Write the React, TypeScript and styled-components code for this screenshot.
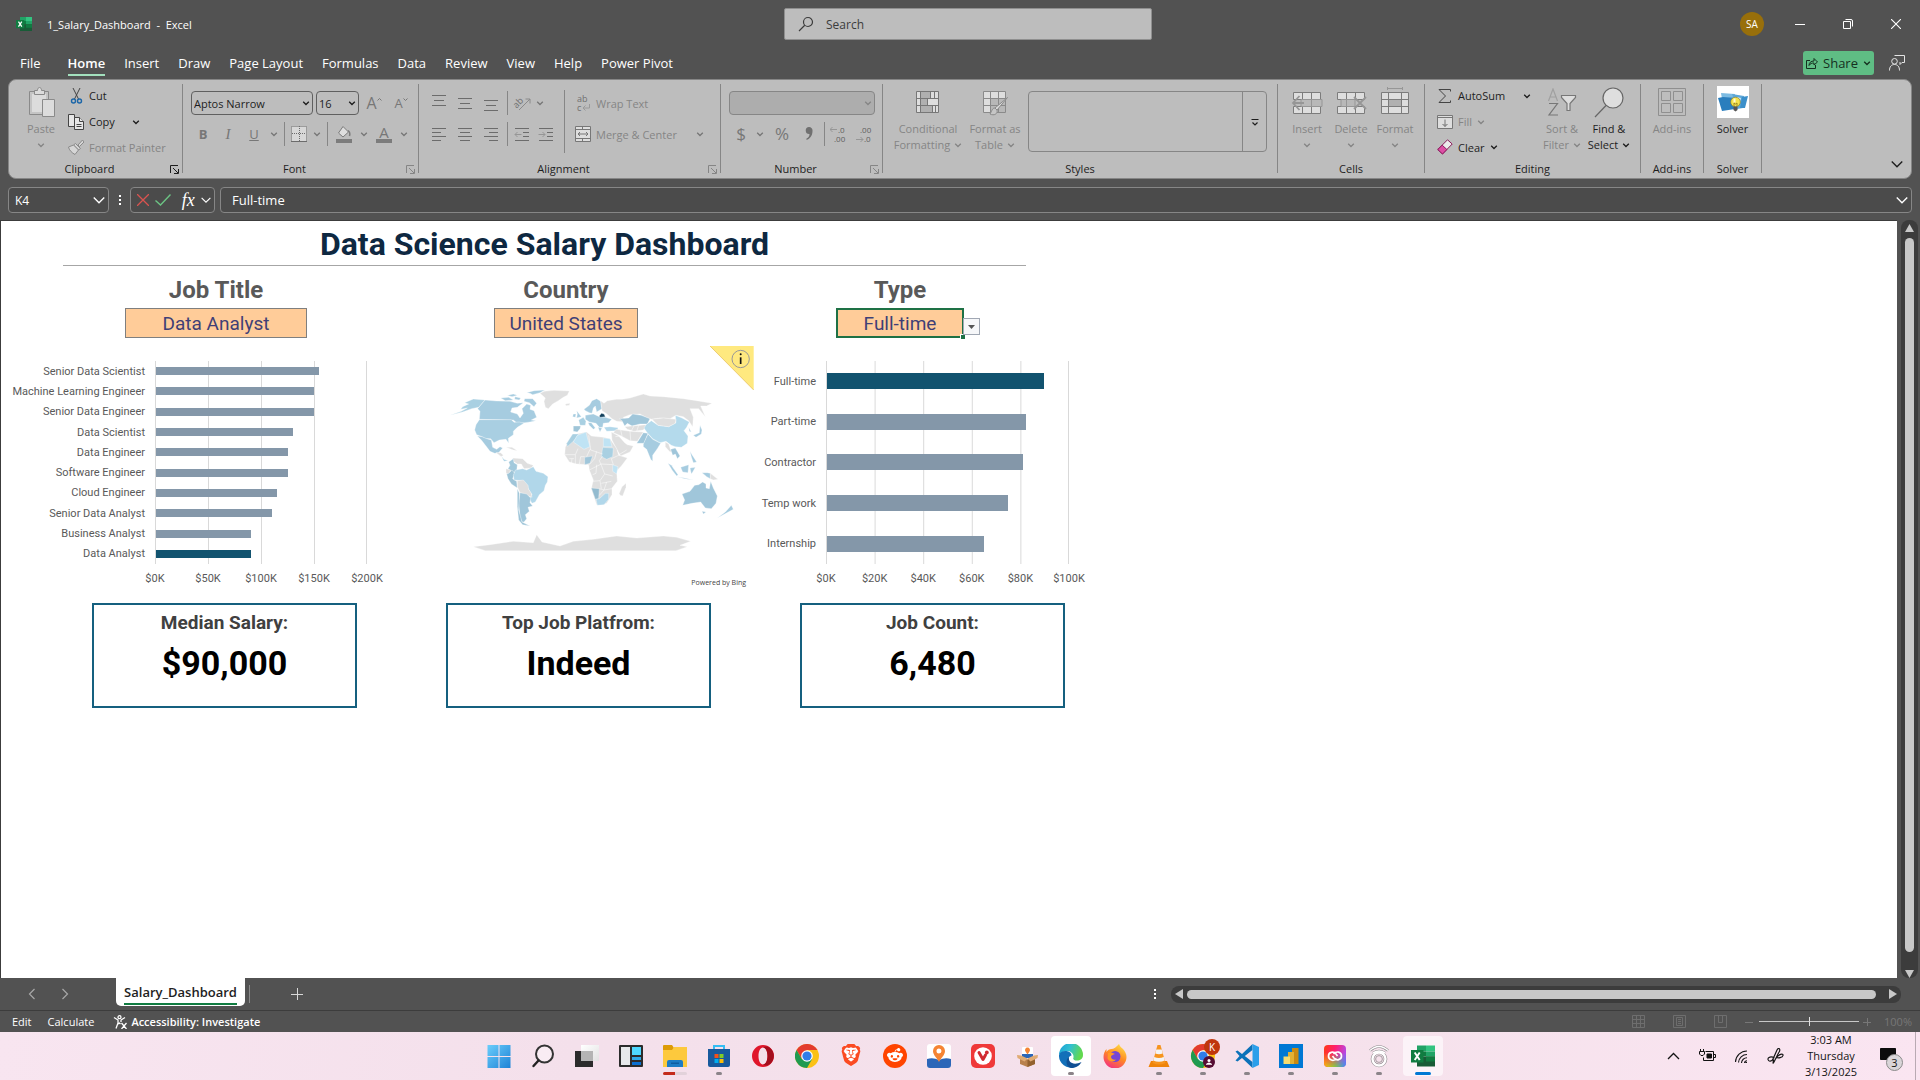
import React from "react";
import styled, { createGlobalStyle, css } from "styled-components";
import { FaBrave, FaRedditAlien } from "react-icons/fa6";

const UI = `"Open Sans", "Noto Sans", sans-serif`;
const CELL = `Roboto, "Liberation Sans", sans-serif`;
const C = {
  frame: "#525252",
  ribbon: "#bdbdbd",
  line: "#868686",
  ink: "#1d1d1d",
  off: "#858585",
  bar: "#8497a9",
  barOn: "#12536f",
  card: "#15607f",
};

const Global = createGlobalStyle`
  * { box-sizing: border-box; }
  html, body { margin: 0; height: 100%; }
  body { background: ${C.frame}; font-family: ${UI}; font-size: 11px; color: ${C.ink}; overflow: hidden; }
  button, input, select { font: inherit; color: inherit; margin: 0; padding: 0; border: 0; background: none; outline: none; }
  button { flex: none; }
  svg { display: block; flex: none; }
`;

const Shell = styled.div`
  height: 100vh;
  display: flex;
  flex-direction: column;
`;
const Inset = styled.div<{ $w: number }>`
  width: ${(p) => p.$w}px;
  flex: none;
`;
const Spacer = styled.div`
  flex: 1;
`;

/* ---------- title bar ---------- */
const TitleBar = styled.header`
  height: 48px;
  flex: none;
  display: grid;
  grid-template-columns: 1fr 368px 1fr;
  align-items: center;
  padding-left: 16px;
  color: #fff;
`;
const DocName = styled.div`
  display: flex;
  align-items: center;
  gap: 15px;
  white-space: pre;
`;
const SearchBox = styled.label`
  height: 32px;
  display: flex;
  align-items: center;
  gap: 12px;
  padding-left: 13px;
  border: 1px solid #8f8f8f;
  border-radius: 2px;
  background: #bdbdbd;
  color: #3c3c3c;
  font-size: 12px;
  input { flex: 1; min-width: 0; }
  input::placeholder { color: #3c3c3c; opacity: 1; }
`;
const WindowTools = styled.div`
  display: flex;
  justify-content: flex-end;
  align-items: center;
`;
const Avatar = styled.button`
  width: 24px;
  height: 24px;
  margin-right: 12px;
  border-radius: 50%;
  background: #986f0b;
  font-size: 10px;
`;
const WinButton = styled.button`
  width: 48px;
  height: 48px;
  display: grid;
  place-items: center;
`;

/* ---------- tabs ---------- */
const TabRow = styled.nav`
  height: 31px;
  flex: none;
  display: flex;
  align-items: center;
  padding: 0 15px 1px 11px;
  color: #fff;
  font-size: 13px;
`;
const Tab = styled.button<{ $active?: boolean; $wide?: boolean }>`
  height: 26px;
  padding: 0 10px 0 9px;
  margin-right: ${(p) => (p.$wide ? 8 : 0)}px;
  font-weight: ${(p) => (p.$active ? 600 : 400)};
  span {
    display: block;
    height: 26px;
    line-height: 26px;
    border-bottom: 2px solid ${(p) => (p.$active ? "#a3e0bd" : "transparent")};
  }
`;
const ShareButton = styled.button`
  height: 24px;
  width: 71px;
  display: flex;
  align-items: center;
  justify-content: center;
  gap: 5px;
  border-radius: 3px;
  background: #5fbd84;
  color: #15301f;
`;
const PlainButton = styled.button`
  margin-left: 15px;
  display: grid;
  color: #e4e4e4;
`;

/* ---------- ribbon ---------- */
const Ribbon = styled.section`
  height: 100px;
  flex: none;
  margin: 0 8px;
  display: flex;
  border: 1px solid ${C.line};
  border-radius: 8px;
  background: ${C.ribbon};
`;
const GroupBox = styled.div<{ $w: number }>`
  width: ${(p) => p.$w}px;
  display: flex;
  flex-direction: column;
`;
const GroupBody = styled.div`
  height: 80px;
  display: flex;
`;
const GroupFoot = styled.div`
  height: 18px;
  display: flex;
  align-items: center;
  line-height: 16px;
  span {
    flex: 1;
    text-align: center;
    white-space: nowrap;
  }
`;
const GroupRule = styled.div`
  width: 1px;
  margin: 4px 0 5px;
  background: ${C.line};
`;
const InnerRule = styled.div`
  width: 1px;
  margin: 10px 0 7px;
  background: ${C.line};
`;
const Launcher = styled.button<{ $off?: boolean }>`
  width: 12px;
  color: ${(p) => (p.$off ? C.off : C.ink)};
`;
const Rows = styled.div<{ $left: number; $w?: number }>`
  width: ${(p) => (p.$w ? p.$w + "px" : "100%")};
  padding: 11px 0 0 ${(p) => p.$left}px;
  display: flex;
  flex-direction: column;
  gap: 7px;
`;
const Row = styled.div<{ $gap?: number }>`
  height: 24px;
  display: flex;
  align-items: center;
  gap: ${(p) => p.$gap ?? 0}px;
`;
const Tool = styled.button<{ $w: number; $size?: number }>`
  width: ${(p) => p.$w}px;
  height: 24px;
  display: grid;
  place-items: center;
  color: #777;
  font-size: ${(p) => p.$size ?? 13}px;
  line-height: 24px;
`;
const Tick = styled.div`
  width: 1px;
  height: 24px;
  margin: 0 3px;
  background: ${C.line};
`;
const List = styled.div<{ $left: number; $w?: number }>`
  width: ${(p) => (p.$w ? p.$w + "px" : "auto")};
  flex: none;
  padding: 3px 0 0 ${(p) => p.$left}px;
  display: flex;
  flex-direction: column;
`;
const ListRow = styled.div`
  height: 26px;
  display: flex;
  align-items: center;
`;
const SmallButton = styled.button<{ $off?: boolean }>`
  height: 24px;
  padding: 0 1px;
  display: flex;
  align-items: center;
  gap: 5px;
  white-space: nowrap;
  color: ${(p) => (p.$off ? C.off : C.ink)};
`;
const CopyDrop = styled.button`
  margin-left: 16px;
`;
const BigButton = styled.button<{ $w: number; $off?: boolean }>`
  width: ${(p) => p.$w}px;
  padding-top: 6px;
  display: flex;
  flex-direction: column;
  align-items: center;
  gap: 3px;
  line-height: 16px;
  white-space: nowrap;
  color: ${(p) => (p.$off ? C.off : C.ink)};
`;
const BigIcon = styled.span`
  height: 32px;
  display: grid;
  place-items: center;
`;
const BigText = styled.span`
  display: flex;
  flex-direction: column;
  align-items: center;
  span {
    display: flex;
    align-items: center;
    gap: 4px;
    min-height: 16px;
  }
`;
const Pick = styled.label<{ $w: number; $off?: boolean }>`
  width: ${(p) => p.$w}px;
  height: 24px;
  display: flex;
  align-items: center;
  padding: 0 2px;
  border: 1px solid ${(p) => (p.$off ? C.line : "#606060")};
  border-radius: 4px;
  background: ${(p) => (p.$off ? "#adadad" : "transparent")};
  color: ${(p) => (p.$off ? C.off : C.ink)};
  select { flex: 1; min-width: 0; appearance: none; }
`;
const GrowText = styled.span`
  display: flex;
  svg { margin-top: 6px; }
`;
const Italic = styled.i`
  font-family: "Liberation Serif", serif;
  font-size: 15px;
`;
const FontColor = styled.span`
  width: 16px;
  height: 18px;
  border-bottom: 4px solid #7c7c7c;
  font-size: 15px;
  line-height: 14px;
`;
const Gallery = styled.div`
  width: 239px;
  height: 61px;
  margin: 11px 0 0 2px;
  display: flex;
  justify-content: flex-end;
  border: 1px solid ${C.line};
  border-radius: 4px;
`;
const GalleryMore = styled.button`
  width: 24px;
  display: grid;
  place-items: center;
  border-left: 1px solid ${C.line};
`;
const Collapse = styled.button`
  align-self: flex-end;
  padding: 8px;
`;

/* ---------- formula bar ---------- */
const FormulaRow = styled.div`
  height: 41px;
  flex: none;
  padding: 8px 8px 7px;
  display: flex;
  color: #fff;
  font-size: 12px;
`;
const Field = styled.div<{ $w?: number }>`
  ${(p) => (p.$w ? css`width: ${p.$w}px;` : css`flex: 1;`)}
  height: 26px;
  display: flex;
  align-items: center;
  justify-content: space-between;
  padding: 0 3px 0 6px;
  border: 1px solid #868686;
  border-radius: 4px;
  background: #4b4b4b;
  input { flex: 1; min-width: 0; }
`;
const FormulaInput = styled.input`
  padding-left: 5px;
  font-size: 13px;
`;
const Fx = styled.button`
  font-family: "Liberation Serif", serif;
  font-style: italic;
  font-size: 18px;
  padding-left: 4px;
`;
const Grip = styled.div`
  width: 21px;
  display: grid;
  place-items: center;
`;

/* ---------- sheet ---------- */
const Work = styled.main`
  flex: 1;
  min-height: 0;
  display: flex;
`;
const Sheet = styled.section`
  flex: 1;
  min-width: 0;
  overflow: hidden;
  border-left: 1px solid #3c3c3c;
  border-top: 1px solid #3c3c3c;
  background: #fff;
  font-family: ${CELL};
`;
const VScroll = styled.div`
  width: 23px;
  display: flex;
  flex-direction: column;
  align-items: center;
  padding-left: 2px;
`;
const VTrack = styled.div`
  flex: 1;
  width: 17px;
  display: flex;
  flex-direction: column;
  align-items: center;
  gap: 6px;
  padding-top: 4px;
  border-radius: 8px;
  background: #3c3c3c;
`;
const VThumb = styled.div`
  width: 9px;
  flex: 1;
  margin-bottom: 12px;
  border-radius: 5px;
  background: #c8c8c8;
`;
const Heading = styled.h1`
  width: 963px;
  height: 45px;
  margin: 0 0 0 62px;
  border-bottom: 1px solid #a6a6a6;
  text-align: center;
  font-size: 32px;
  line-height: 46px;
  font-weight: 700;
  color: #0e2841;
`;
const Filters = styled.div`
  display: grid;
  grid-template-columns: 430px 270px 398px;
  justify-items: center;
  align-items: start;
  padding-top: 11px;
  height: 80px;
`;
const FilterCell = styled.div`
  position: relative;
  display: flex;
  flex-direction: column;
  align-items: center;
  gap: 5px;
  label {
    height: 26px;
    line-height: 26px;
    font-size: 24px;
    font-weight: 700;
    color: #595959;
  }
`;
const CellSelect = styled.select<{ $w: number; $on?: boolean }>`
  appearance: none;
  width: ${(p) => p.$w}px;
  height: 30px;
  border: ${(p) => (p.$on ? "2px solid #1e7145" : "1px solid #7f7f7f")};
  background: #ffcc99;
  color: #3f3f76;
  font-size: 19px;
  text-align: center;
  text-align-last: center;
`;
const DropMark = styled.button`
  position: absolute;
  right: -16px;
  bottom: 3px;
  width: 17px;
  height: 17px;
  display: grid;
  place-items: center;
  border: 1px solid #a0a7b3;
  background: #f6f7f9;
  color: #555;
`;
const FillHandle = styled.i`
  position: absolute;
  right: -1px;
  bottom: -1px;
  width: 5px;
  height: 5px;
  border-left: 1px solid #fff;
  border-top: 1px solid #fff;
  background: #1e7145;
`;
const Charts = styled.div`
  height: 257px;
  display: grid;
  grid-template-columns: 438px 315px 340px;
`;
const Chart = styled.figure<{ $labels: number; $plot: number }>`
  margin: 0;
  padding-top: 15px;
  display: grid;
  grid-template-columns: ${(p) => p.$labels}px ${(p) => p.$plot}px;
  grid-template-rows: 203px 28px;
  font-size: 11px;
  color: #595959;
`;
const Names = styled.div`
  display: flex;
  flex-direction: column;
  padding-right: 10px;
  span {
    flex: 1;
    display: flex;
    align-items: center;
    justify-content: flex-end;
    white-space: nowrap;
  }
`;
const Plot = styled.div<{ $steps: number }>`
  display: flex;
  flex-direction: column;
  padding-left: 1px;
  border-right: 1px solid #d9d9d9;
  background-image: linear-gradient(to right, #d9d9d9 1px, transparent 1px);
  background-size: calc((100% + 1px) / ${(p) => p.$steps}) 100%;
`;
const BarRow = styled.div`
  flex: 1;
  display: flex;
  align-items: center;
`;
const Bar = styled.div<{ $h: number; $on?: boolean }>`
  height: ${(p) => p.$h}px;
  background: ${(p) => (p.$on ? C.barOn : C.bar)};
`;
const Axis = styled.div`
  grid-column: 2;
  display: flex;
  justify-content: space-between;
  align-items: center;
  span {
    width: 0;
    display: flex;
    justify-content: center;
    white-space: nowrap;
  }
`;
const MapBox = styled.figure`
  margin: 0;
  display: flex;
  flex-direction: column;
  align-items: flex-end;
  gap: 22px;
  color: #444;
  figcaption { padding-right: 8px; font-family: ${UI}; font-size: 7px; }
`;
const Cards = styled.div`
  display: flex;
  gap: 89px;
  padding-left: 91px;
`;
const Card = styled.article`
  width: 265px;
  height: 105px;
  border: 2px solid ${C.card};
  text-align: center;
  h2 {
    margin: 6px 0 0;
    font-size: 19px;
    line-height: 24px;
    color: #404040;
  }
  p {
    margin: 8px 0 0;
    font-size: 34px;
    line-height: 40px;
    font-weight: 700;
    color: #000;
  }
`;

/* ---------- sheet tabs and status ---------- */
const SheetTabs = styled.div`
  height: 32px;
  flex: none;
  display: flex;
  align-items: center;
  color: #d8d8d8;
  padding: 0 19px 0 15px;
`;
const SheetNav = styled.button`
  width: 33px;
  display: grid;
  place-items: center;
  color: #a8a8a8;
`;
const SheetTab = styled.button`
  align-self: flex-start;
  height: 28px;
  margin-left: 35px;
  padding: 0 8px;
  border-radius: 0 0 5px 5px;
  background: #fff;
  color: #222;
  font-size: 13px;
  font-weight: 600;
  span {
    display: block;
    height: 25px;
    width: 113px;
    line-height: 25px;
    border-bottom: 2px solid #107c41;
  }
`;
const TabRule = styled.div`
  width: 1px;
  height: 18px;
  margin-left: 4px;
  background: #8a8a8a;
`;
const AddSheet = styled.button`
  margin-left: 41px;
`;
const HScroll = styled.div`
  width: 730px;
  height: 17px;
  margin-left: 15px;
  display: flex;
  align-items: center;
  gap: 4px;
  padding: 0 4px;
  border-radius: 8px;
  background: #3c3c3c;
`;
const HThumb = styled.div`
  flex: 1;
  height: 9px;
  margin-right: 9px;
  border-radius: 5px;
  background: #c8c8c8;
`;
const Status = styled.footer`
  height: 22px;
  flex: none;
  display: flex;
  align-items: center;
  gap: 16px;
  padding: 0 8px 0 12px;
  border-top: 1px solid #3c3c3c;
  color: #fff;
`;
const Access = styled.button`
  display: flex;
  align-items: center;
  gap: 4px;
  margin-left: 3px;
  font-weight: 600;
`;
const ViewTools = styled.div`
  display: flex;
  align-items: center;
  color: #777;
`;
const ViewButton = styled.button`
  width: 41px;
  display: grid;
  place-items: center;
  color: #6e6e6e;
`;
const Zoom = styled.input`
  appearance: none;
  width: 100px;
  height: 10px;
  margin: 0 4px 0 6px;
  background: linear-gradient(#c8c8c8, #c8c8c8) center / 100% 1px no-repeat;
  &::-webkit-slider-thumb {
    appearance: none;
    width: 1px;
    height: 9px;
    background: #e0e0e0;
  }
`;

/* ---------- taskbar ---------- */
const Taskbar = styled.footer`
  height: 48px;
  flex: none;
  display: grid;
  grid-template-columns: 1fr auto 1fr;
  padding-left: 2px;
  background: linear-gradient(100deg, #f8e5f0, #f4e0eb 30%, #f5e1eb 65%, #fae5f1);
  color: #141414;
`;
const Apps = styled.div`
  grid-column: 2;
  display: flex;
`;
const AppSlot = styled.button<{ $bg?: string }>`
  width: 44px;
  height: 48px;
  padding: 4px 2px 5px;
  span {
    height: 40px;
    display: flex;
    flex-direction: column;
    align-items: center;
    padding-top: 8px;
    gap: 4px;
    border-radius: 4px;
    background: ${(p) => p.$bg ?? "transparent"};
  }
`;
const Mark = styled.i<{ $kind: string }>`
  flex: none;
  width: ${(p) => ({ dot: 6, busy: 24, open: 16 })[p.$kind]}px;
  height: 3px;
  border-radius: 2px;
  background: ${(p) =>
    ({ dot: "#8b8489", busy: "linear-gradient(90deg, #c42b1c 50%, #e2d2da 50%)", open: "#0078d4" })[p.$kind]};
`;
const Tray = styled.div`
  display: flex;
  justify-content: flex-end;
  align-items: center;
  padding-right: 4px;
`;
const TrayButton = styled.button`
  width: 34px;
  display: grid;
  place-items: center;
`;
const Clock = styled.time`
  width: 78px;
  text-align: center;
  line-height: 16px;
`;
const Notice = styled.button`
  position: relative;
  width: 36px;
  height: 48px;
  display: grid;
  place-items: center;
`;
const Badge = styled.b`
  position: absolute;
  left: 16px;
  top: 22px;
  width: 17px;
  height: 17px;
  border: 1px solid #8a8a8a;
  border-radius: 50%;
  background: #d9d5d8;
  font-size: 11px;
  font-weight: 400;
  line-height: 15px;
`;
const Edge = styled.div`
  width: 1px;
  height: 48px;
  margin-left: 9px;
  background: #b9aab3;
`;

/* ---------- line icons ---------- */
type IconProps = { d: string; w?: number; h?: number; s?: number; c?: string; f?: string };
const Line = ({ d, w = 16, h = w, s = 1, c = "currentColor", f = "none" }: IconProps) => (
  <svg width={w} height={h} viewBox={`0 0 ${w} ${h}`} fill={f} stroke={c} strokeWidth={s}>
    <path d={d} />
  </svg>
);
const Chevron = ({ w = 8 }: { w?: number }) => (
  <svg width={w} height={w} viewBox="0 0 8 8" fill="none" stroke="currentColor" strokeWidth={w > 8 ? 0.9 : 1.3}>
    <path d={w > 8 ? "M.5 2.300 4 5.800l3.500-3.500" : "M1.200 2.700 4 5.500l2.800-2.800"} />
  </svg>
);
const Drop = () => (
  <Tool $w={14} aria-label="More">
    <Chevron />
  </Tool>
);

const PasteIcon = () => (
  <svg width="30" height="32" viewBox="0 0 30 32" fill="#dcdcdc" stroke="#8a8a8a">
    <path d="M3.500 5.500h19v23h-19z" fill="#c4c4c4" />
    <path d="M6 8h14v18H6z" stroke="none" />
    <path d="M8.500 8.500v-4h3c0-4 4-4 4 0h3v4z" />
    <path d="M16.500 13.500h12v17h-12z" />
  </svg>
);
const CutIcon = () => (
  <svg width="16" height="16" viewBox="0 0 16 16" fill="none" stroke="#444">
    <path d="M5 0l5.500 11M12 0 6.500 11" />
    <circle cx="5.500" cy="13" r="2" stroke="#1b66a8" strokeWidth="1.400" />
    <circle cx="11.500" cy="13" r="2" stroke="#1b66a8" strokeWidth="1.400" />
  </svg>
);
const CopyIcon = () => (
  <svg width="16" height="16" viewBox="0 0 16 16" fill="#e6e6e6" stroke="#444">
    <path d="M.5.500h6v12h-6z" />
    <path d="M6.500 3.500h5l4 4v8h-9z" />
    <path d="M11.500 3.500v4h4M8.500 10.500h5M8.500 12.500h5" />
  </svg>
);
const BrushIcon = () => (
  <svg width="16" height="16" viewBox="0 0 16 16" fill="#d6d6d6" stroke="#8a8a8a">
    <path d="M14.500 1 10 6l1.500 1.500L16 3z" />
    <path d="M7.500 4.500l5 5-2 1.500-5-5z" />
    <path d="M5.500 6l5 5-3.500 4.500C4 14 1 11 .5 8z" />
  </svg>
);
const AlignIcon = ({ lines }: { lines: [number, number, number][] }) => (
  <svg width="16" height="16" viewBox="0 0 16 16" stroke="#6c6c6c">
    {lines.map(([y, a, b]) => (
      <path key={y} d={`M${a} ${y + 0.5}H${b}`} />
    ))}
  </svg>
);
const IndentIcon = ({ out }: { out?: boolean }) => (
  <svg width="16" height="16" viewBox="0 0 16 16" fill="none" stroke="#6c6c6c">
    <path d="M1 2.500h14M9 6.500h6M9 10.500h6M1 14.500h14" />
    <path stroke="#969696" d={out ? "M7.500 8.500H1M3.500 6 1 8.500 3.500 11" : "M.5 8.500H7M4.500 6 7 8.500 4.500 11"} />
  </svg>
);
const BorderIcon = () => (
  <svg width="16" height="16" viewBox="0 0 16 16" fill="none" stroke="#6c6c6c">
    <path d="M.5.500h15v15H.5z" fill="#d8d8d8" strokeDasharray="1 1" />
    <path d="M8.500 0v15M1 7.500h14" strokeDasharray="1 1" />
    <path d="M0 15.500h16" />
  </svg>
);
const FillIcon = () => (
  <svg width="18" height="18" viewBox="0 0 18 18" fill="#dedede" stroke="#7c7c7c">
    <path d="M8 1.500 13.500 7 8 12 3.500 8z" />
    <path d="M13 5.500c2.500 2 2 4 1.500 5.500" fill="none" strokeWidth="1.500" />
    <path d="M1 14h16v4H1z" fill="#7c7c7c" stroke="none" />
  </svg>
);
const Orientation = () => (
  <svg width="18" height="18" viewBox="0 0 18 18" fill="none" stroke="#8a8a8a">
    <text x="0" y="12" fontSize="9" fill="#707070" stroke="none" transform="rotate(-45 5 9)" fontFamily={UI}>
      ab
    </text>
    <path d="M6 16 17 5M12.500 5H17v4.500" />
  </svg>
);
const WrapIcon = () => (
  <svg width="16" height="20" viewBox="0 0 16 20" fill="none" stroke="#9a9a9a">
    <text x="2" y="9" fontSize="9" fill="#707070" stroke="none" fontFamily={UI}>ab</text>
    <text x="2" y="18" fontSize="9" fill="#707070" stroke="none" fontFamily={UI}>c</text>
    <path d="M14.500 11v4H8M10.500 12.500 8 15l2.500 2.500" />
  </svg>
);
const MergeIcon = () => (
  <svg width="16" height="16" viewBox="0 0 16 16" fill="#dedede" stroke="#777">
    <path d="M.5.500h15v15H.5zM.5 3.500h15M.5 12.500h15M7.500.500v3M7.500 12.500v3M3 8h10M5 6 3 8l2 2M11 6l2 2-2 2" />
  </svg>
);
const Decimal = ({ more }: { more?: boolean }) => (
  <svg width="17" height="20" viewBox="0 0 17 20" fill="none" stroke="#969696">
    <text x={more ? 4 : 8} y="9" fontSize="8" fill="#606060" stroke="none" fontFamily={UI}>{more ? ".00" : ".0"}</text>
    <text x={more ? 8 : 4} y="18" fontSize="8" fill="#606060" stroke="none" fontFamily={UI}>{more ? ".0" : ".00"}</text>
    <path d={more ? "M0 15.500h7M4.500 13 7 15.500 4.500 18" : "M7 5.500H0M2.500 3 0 5.500 2.500 8"} />
  </svg>
);
const CondIcon = () => (
  <svg width="28" height="24" viewBox="0 0 28 24" fill="#dedede" stroke="#777">
    <path d="M2.500 1.500h22v21h-22z" />
    <path d="M7 2h9v6H7zM7 9h7v6H7zM7 16h11v6H7z" fill="#b0b0b0" stroke="none" />
    <path d="M2.500 8.500h22M2.500 15.500h22M6.500 1.500v21M20.500 1.500v7M16.500 1.500v7M13.500 8.500v7M18.500 15.500v7M21.500 15.500v7" />
  </svg>
);
const TableIcon = () => (
  <svg width="30" height="30" viewBox="0 0 30 30" fill="#dedede" stroke="#8a8a8a">
    <path d="M3.500 4.500h22v21h-22z" />
    <path d="M11 12h14v13H11z" fill="#b8b8b8" stroke="none" />
    <path d="M3.500 11.500h22M3.500 18.500h22M10.500 4.500v21M18.500 4.500v21" />
    <path d="M27.500 10.500 17 23l-2-2z" />
    <path d="M15 21c-3 0-3 3-5 6 4 2 8 0 7-4z" fill="#c6c6c6" />
  </svg>
);
const CellsIcon = ({ kind }: { kind: "insert" | "delete" | "format" }) => (
  <svg width="32" height="30" viewBox="0 0 32 30" fill="#dedede" stroke="#7c7c7c">
    {kind === "format" ? (
      <>
        <path d="M2.500 5.500h27v21h-27zM2.500 12.500h27M2.500 19.500h27M9.500 5.500v21M22.500 5.500v21" />
        <path d="M10 13h12v6H10z" fill="#b0b0b0" stroke="none" />
        <path d="M8.500 1.500h15M8.500 0v3M23.500 0v3" stroke="#969696" />
      </>
    ) : (
      <>
        <path d="M2.500 5.500h27v7h-27zM2.500 19.500h27v7h-27zM11.500 5.500v7M20.500 5.500v7M11.500 19.500v7M20.500 19.500v7" />
        {kind === "insert" ? (
          <>
            <path d="M10 12.500h21v7H10zM20.500 12.500v7" fill="#b8b8b8" stroke="#969696" />
            <path d="M13 16H2M8.500 9 2 16l6.500 7" fill="none" stroke="#969696" strokeWidth="1.800" />
          </>
        ) : (
          <>
            <path d="M6 12.500h14v7H6zM11.500 12.500v7" fill="#b8b8b8" stroke="#969696" />
            <path d="M19 10l12 12M31 10 19 22" fill="none" stroke="#969696" strokeWidth="1.800" />
          </>
        )}
      </>
    )}
  </svg>
);
const SigmaIcon = () => <Line d="M13.500 3.500v-2H2L8.500 8 2 14.500h11.500v-2" c="#444" />;
const FillDown = () => (
  <svg width="16" height="14" viewBox="0 0 16 14" fill="#dedede" stroke="#777">
    <path d="M.5.500h15v13H.5zM.5 2.500h15M8 4.500v7M5.500 9 8 11.500 10.500 9" />
  </svg>
);
const Eraser = () => (
  <svg width="16" height="16" viewBox="0 0 16 16" fill="#ececec" stroke="#8b1a5c">
    <path d="M10.500.800 15.200 5 5.500 15 .8 10.500z" />
    <path d="M5.200 6.200 9.900 10.500 5.500 15 .8 10.500z" fill="#dd4fa5" />
  </svg>
);
const SortIcon = () => (
  <svg width="30" height="28" viewBox="0 0 30 28" fill="none" stroke="#8a8a8a" strokeWidth="1.200">
    <path d="M1.500 13 6 1l4.500 12M3 9h6" stroke="#a0a0a0" />
    <path d="M2 15.500h8.500L2 27h9" stroke="#777" />
    <path d="M14.500 7.500h14v2l-5.500 6v7h-3v-7l-5.500-6z" fill="#dedede" stroke="#777" />
  </svg>
);
const FindIcon = () => (
  <svg width="32" height="32" viewBox="0 0 32 32" fill="#dedede" stroke="#666" strokeWidth="1.200">
    <circle cx="20" cy="12" r="10" />
    <path d="M13 19.500 2 31" />
  </svg>
);
const AddinsIcon = () => (
  <svg width="28" height="28" viewBox="0 0 28 28" fill="none" stroke="#8f8f8f">
    <path d="M.5.500h27v27H.5zM3.500 3.500h9v9h-9zM15.500 3.500h9v9h-9zM3.500 15.500h9v9h-9zM15.500 15.500h9v9h-9z" />
  </svg>
);
const SolverIcon = () => (
  <svg width="32" height="32" viewBox="0 0 32 32">
    <path fill="#fff" d="M0 0h32v32H0z" />
    <path fill="#7cbbe2" d="M4 7l14 1-1 6-12-1z" />
    <path fill="#2a7ebd" d="M1 12l5-1 13 1-1 11-13 2z" />
    <path fill="#5da7d8" d="M15 8l12 2-1 12-6 1z" />
    <path fill="#cfe6f5" d="M20 11l4 1-1 4-3-1z" />
    <path fill="#3b8fca" d="M25 11l6-1-3 12h-5z" />
    <circle cx="18.500" cy="16" r="4.800" fill="#f5e34c" stroke="#8a7a20" strokeWidth=".6" />
    <path fill="#fffbd0" d="M16.500 12.500h2v4h-2z" />
    <path fill="none" stroke="#8a7a20" strokeWidth=".8" d="M17 20v-3l1.500 1 1.500-1v3" />
    <path fill="#555" d="M16.500 20.500h4V24l-2 1.500-2-1.500z" />
  </svg>
);
const ExcelIcon = ({ size }: { size: number }) => (
  <svg width={size} height={size} viewBox="0 0 24 24">
    <path fill="#21a366" d="M6 1.500h9v6H6z" />
    <path fill="#33c481" d="M15 1.500h9v6h-9z" />
    <path fill="#107c41" d="M6 7.500h9v5H6z" />
    <path fill="#21a366" d="M15 7.500h9v5h-9z" />
    <path fill="#185c37" d="M6 12.500h18v10H6z" />
    <path fill="#107c41" d="M15 12.500h9v5h-9zM0 6h12.500v12.500H0z" />
    <path stroke="#fff" strokeWidth="1.900" d="M3.700 8.500l5 7.500M8.700 8.500l-5 7.500" />
  </svg>
);

/* ---------- taskbar logos ---------- */
const Logo = ({ children }: { children: React.ReactNode }) => (
  <svg width="24" height="24" viewBox="0 0 24 24">
    {children}
  </svg>
);
const ChromeArt = () => (
  <>
    <circle cx="12" cy="12" r="12" fill="#fbc116" />
    <path fill="#e33b2e" d="M1.600 6A12 12 0 0 1 22.400 6H12L6.800 15z" />
    <path fill="#1f9a50" d="M1.600 6A12 12 0 0 0 12 24l5.200-9-10.400 0z" />
    <circle cx="12" cy="12" r="5.800" fill="#fff" />
    <circle cx="12" cy="12" r="4.600" fill="#2f7de9" />
  </>
);
const Windows = () => (
  <Logo>
    <defs>
      <linearGradient id="win" x2="1" y2="1">
        <stop stopColor="#6bcdfb" />
        <stop offset="1" stopColor="#1d82d6" />
      </linearGradient>
    </defs>
    <path fill="url(#win)" d="M.5 1h11v11H.5zM12.500 1h11v11h-11zM.5 13h11v11H.5zM12.500 13h11v11h-11z" />
  </Logo>
);
const SearchLogo = () => (
  <Logo>
    <circle cx="13.500" cy="10" r="8.500" fill="#f9ecf3" stroke="#333" strokeWidth="2" />
    <path stroke="#222" strokeWidth="2.400" strokeLinecap="round" d="M7.500 16.500 2.500 22" />
  </Logo>
);
const TaskView = () => (
  <Logo>
    <defs>
      <linearGradient id="tv" x2="1" y2="1">
        <stop stopColor="#ffffff" />
        <stop offset="1" stopColor="#e2e2e2" />
      </linearGradient>
    </defs>
    <path fill="#2b2b2b" d="M0 7h18v16H0z" />
    <path fill="url(#tv)" d="M6 1h18v16H6z" />
    <path fill="#b4b4b4" d="M6 7h12v10H6z" />
  </Logo>
);
const Widgets = () => (
  <Logo>
    <rect y="1" width="24" height="22" rx="1" fill="#2c2c2c" />
    <path fill="#e6e8ea" d="M2 3h9v18H2z" />
    <path fill="#4fd8ff" d="M13 3h9v8h-9z" />
    <path fill="#2fa9e8" d="M13 13h9v3h-9z" />
    <path fill="#0b6fd0" d="M13 18h9v3h-9z" />
  </Logo>
);
const Folder = () => (
  <Logo>
    <path fill="#dd9b06" d="M0 2q0-1 1-1h8l2 3v4H0z" />
    <path fill="#fdc93d" d="M0 6h9l2-3h13v20H0z" />
    <path fill="#1d7cc4" d="M4 23v-5q0-2 2-2h12q2 0 2 2v5z" />
    <path fill="#0f5da0" d="M8 18.500h8v1.500H8z" />
  </Logo>
);
const Store = () => (
  <Logo>
    <path fill="none" stroke="#35bdf3" strokeWidth="2" d="M7 6V2h10v4" />
    <path fill="#175a9d" d="M1 5h22v16q0 2-2 2H3q-2 0-2-2z" />
    <path fill="#f1511b" d="M7.500 10h4v4h-4z" />
    <path fill="#80cc28" d="M12.500 10h4v4h-4z" />
    <path fill="#00adef" d="M7.500 15h4v4h-4z" />
    <path fill="#fbbc09" d="M12.500 15h4v4h-4z" />
  </Logo>
);
const Opera = () => (
  <Logo>
    <path fill="#e0162b" fillRule="evenodd" d="M12 1a11 11 0 1 0 0 22 11 11 0 0 0 0-22zm0 2.500c2.800 0 4.500 3.700 4.500 8.500s-1.700 8.500-4.500 8.500S7.500 16.800 7.500 12 9.200 3.500 12 3.500z" />
    <path fill="#a30f1e" d="M12 3.500c3-2 6.500-.5 8.500 2 3 4 3 9 0 13-2 2.500-5.500 4-8.500 2 2.800 0 4.500-3.700 4.500-8.500S14.800 3.500 12 3.500z" />
  </Logo>
);
const Maps = () => (
  <Logo>
    <rect width="24" height="24" rx="3" fill="#fff" />
    <path fill="#2b66b8" d="M0 15q6-2 12 1 6-3 12-1v6q0 3-3 3H3q-3 0-3-3z" />
    <path fill="#f58433" fillRule="evenodd" d="M12 1a6 6 0 0 1 6 6c0 4-4 7-6 11-2-4-6-7-6-11a6 6 0 0 1 6-6zm0 3.500a2.500 2.500 0 1 0 0 5 2.500 2.500 0 0 0 0-5z" />
  </Logo>
);
const Vivaldi = () => (
  <Logo>
    <rect width="24" height="24" rx="5" fill="#ef3939" />
    <circle cx="12" cy="12" r="8.800" fill="#fff" />
    <path fill="none" stroke="#d02a30" strokeWidth="3" strokeLinecap="round" strokeLinejoin="round" d="M8 8.500l4 7 2.500-4.500" />
    <circle cx="15.800" cy="8.500" r="1.900" fill="#d02a30" />
  </Logo>
);
const Parcel = () => (
  <Logo>
    <rect x="7" y="3" width="11" height="9" rx="1" fill="#fff" />
    <path fill="#2b66b8" d="M7 10h11v4H7z" />
    <path fill="#f58433" d="M12.500 3.500a2.500 2.500 0 0 1 2 4l-2 3-2-3a2.500 2.500 0 0 1 2-4z" />
    <path fill="#b9814c" d="M5 13l7.500 2.500L20 13v7l-7.500 3L5 20z" />
    <path fill="#93622f" d="M12.500 15.500 20 13v7l-7.500 3z" />
    <path fill="#e0ab74" d="M2 11l4 .5 6.500 3-3 3L2.500 14zM23 11l-4 .5-6.500 3 3 3 7-3.500z" />
  </Logo>
);
const EdgeLogo = () => (
  <Logo>
    <defs>
      <linearGradient id="edg" x2="1" y2=".3">
        <stop stopColor="#1a9fd8" />
        <stop offset=".5" stopColor="#32c0d0" />
        <stop offset="1" stopColor="#62d94f" />
      </linearGradient>
    </defs>
    <path fill="url(#edg)" d="M0 11A12 12 0 0 1 24 11c0 4-3 5.500-6 5.500s-4.500-1.500-3.500-3C15 9 11 7 8 7 4 7 1 9 0 11z" />
    <path fill="#1370b9" d="M0 11c1-3 4-4.500 7.500-4 3 .3 5 2 5 4.500-3 .5-4 4-2.500 7 1 2 3 4 6 4.500A12 12 0 0 1 0 11z" />
    <path fill="#0f4f93" d="M10 13c-1 5 4 9 12.500 5-2 3.500-5 6-10.500 6-5-1-6-8-2-11z" />
  </Logo>
);
const Firefox = () => (
  <Logo>
    <defs>
      <linearGradient id="ffx" x1=".8" y1="0" x2=".3" y2="1">
        <stop stopColor="#ffe14a" />
        <stop offset=".5" stopColor="#ff8a22" />
        <stop offset="1" stopColor="#f4317f" />
      </linearGradient>
    </defs>
    <path fill="url(#ffx)" d="M16 0c1 3 3 4 4 5 2 2 3.500 5 3.500 8A11.500 11.500 0 0 1 .5 13c0-3 1-6 3-8v3c1-2 3-3 5-3 2 0 5-2 7.500-5z" />
    <circle cx="12" cy="12.500" r="5.500" fill="#7545d6" />
    <path fill="#ff9a26" d="M5 9c3-1 5 0 7 1-2 1-4 1-4 3 0 2 3 3.500 5 2.500-1.500 3-7 2.500-8.500-1z" />
  </Logo>
);
const Vlc = () => (
  <Logo>
    <path fill="#ef8409" d="M4 17h16l2.500 6h-21z" />
    <path fill="#f7941e" d="M10.500 1h3l5 18q-6.500 3-13 0z" />
    <path fill="#f4f4f4" d="M9.300 5.500h5.400l1 4q-3.700 1.500-7.400 0zM7.200 13q4.800 2 9.600 0l1 3.500q-5.800 2.500-11.600 0z" />
  </Logo>
);
const ChromeProfile = () => (
  <svg width="30" height="24" viewBox="-3 0 30 24" overflow="visible">
    <ChromeArt />
    <circle cx="21" cy="3" r="8" fill="#bf360c" />
    <text x="21" y="7" textAnchor="middle" fontSize="10" fill="#fff" fontFamily={UI}>K</text>
    <circle cx="18" cy="18" r="6" fill="#560c32" />
    <circle cx="18" cy="16.500" r="1.500" fill="#fff" />
    <path fill="#fff" d="M15 20q3-3 6 0v.8h-6z" />
  </svg>
);
const Code = () => (
  <Logo>
    <path fill="#0c72b9" d="M17.500 0 7 10 2.500 6.500.500 7.500l4 4.500-4 4.500 2 1L7 14l10.500 10v-6L9.800 12l7.700-6z" />
    <path fill="#2b9fea" d="M17.500 0 24 3v18l-6.500 3z" />
  </Logo>
);
const PowerBi = () => (
  <Logo>
    <path fill="#0078d4" d="M0 0h24v24H0z" />
    <path fill="#c98a12" d="M13 4h6.500v16H13z" />
    <path fill="#e2b133" d="M9 8h6v12H9z" />
    <path fill="#f7dc6f" d="M4.500 12.500H11V20H4.500z" />
  </Logo>
);
const Creative = () => (
  <Logo>
    <defs>
      <linearGradient id="cc" x2="1" y2=".3">
        <stop stopColor="#ff3a10" />
        <stop offset=".5" stopColor="#ff1f6e" />
        <stop offset="1" stopColor="#b548e8" />
      </linearGradient>
      <linearGradient id="cc2" x2="1">
        <stop stopColor="#ffc400" />
        <stop offset=".5" stopColor="#7fd13b" />
        <stop offset="1" stopColor="#2f8fff" />
      </linearGradient>
      <linearGradient id="fade" x2="0" y2="1">
        <stop offset=".35" stopColor="#000" />
        <stop offset="1" stopColor="#fff" />
      </linearGradient>
      <mask id="low"><path d="M0 0h24v24H0z" fill="url(#fade)" /></mask>
    </defs>
    <rect x="1" y="1" width="22" height="22" rx="4" fill="url(#cc)" />
    <rect x="1" y="1" width="22" height="22" rx="4" fill="url(#cc2)" mask="url(#low)" />
    <path fill="none" stroke="#fff" strokeWidth="1.700" d="M13.500 14.500c-3 3.500-8 1.500-8-2.500s5-5 7.500-2l1.500 2M10.500 10c3-3.500 8-2 8 2s-5 5-7.500 2l-1.500-2" />
  </Logo>
);
const RingApp = () => (
  <Logo>
    <g fill="none" stroke="#8f8a8d" strokeWidth="3.600">
      <circle cx="12" cy="15" r="6.500" />
      <path d="M3 6.500q9-8 18 0M6 9q6-4 12 0" strokeWidth="2.600" />
    </g>
    <g fill="none" stroke="#fff" strokeWidth="2.400">
      <circle cx="12" cy="15" r="6.500" />
      <circle cx="12" cy="15" r="3.400" stroke="#8f8a8d" strokeWidth=".8" />
      <path d="M3 6.500q9-8 18 0M6 9q6-4 12 0" strokeWidth="1.600" />
    </g>
  </Logo>
);
const Brave = () => (
  <Logo>
    <path fill="#fff" d="M6 4h12l1 8-7 9-7-9z" />
    <FaBrave x="1" y="0" size={22} color="#fb4b22" />
  </Logo>
);
const Reddit = () => (
  <Logo>
    <circle cx="12" cy="12" r="12" fill="#ff4500" />
    <FaRedditAlien x="4" y="3" size={16} color="#fff" />
  </Logo>
);

const apps: { name: string; art: React.ReactNode; mark?: string; bg?: string }[] = [
  { name: "Start", art: <Windows /> },
  { name: "Search", art: <SearchLogo /> },
  { name: "Task view", art: <TaskView /> },
  { name: "Widgets", art: <Widgets /> },
  { name: "File Explorer", art: <Folder />, mark: "busy" },
  { name: "Store", art: <Store />, mark: "dot" },
  { name: "Opera", art: <Opera /> },
  { name: "Chrome", art: <Logo><ChromeArt /></Logo> },
  { name: "Brave", art: <Brave /> },
  { name: "Reddit", art: <Reddit /> },
  { name: "Maps", art: <Maps /> },
  { name: "Vivaldi", art: <Vivaldi /> },
  { name: "Parcel", art: <Parcel /> },
  { name: "Edge", art: <EdgeLogo />, mark: "dot", bg: "#fff" },
  { name: "Firefox", art: <Firefox /> },
  { name: "VLC", art: <Vlc />, mark: "dot" },
  { name: "Chrome profile", art: <ChromeProfile />, mark: "dot" },
  { name: "Code", art: <Code />, mark: "dot" },
  { name: "Power BI", art: <PowerBi />, mark: "dot" },
  { name: "Creative Cloud", art: <Creative />, mark: "dot" },
  { name: "Ring", art: <RingApp />, mark: "dot" },
  { name: "Excel", art: <ExcelIcon size={24} />, mark: "open", bg: "#fcf3f8" },
];

/* ---------- world map ---------- */
const land: [string, string][] = [
  ["#dfdfdf", "343 184 372 181 418 183 412 196 400 202 385 212 368 222 355 236 346 232 342 214 346 204 330 190"],
  ["#a9d0e2", "165 210 130 207 104 218 116 222 98 230 92 238 112 234 94 244 60 256 98 246 125 236 146 232"],
  ["#a6cce0", "165 210 200 213 240 214 262 220 280 218 262 232 246 234 242 246 262 252 270 264 280 250 276 236 290 222 302 226 300 238 312 242 320 262 304 270 318 272 300 276 285 278 262 280 250 270 148 268 150 244 143 236"],
  ["#a6cce0", "212 204 236 202 250 210 226 212"],
  ["#a6cce0", "255 200 272 204 268 210 254 208"],
  ["#a6cce0", "284 206 308 206 320 220 312 230 298 218 282 214"],
  ["#a6cce0", "290 188 312 182 344 180 330 188 308 194 300 190"],
  ["#a6cce0", "232 196 250 192 262 196 246 200"],
  ["#a9cfe2", "148 269 244 269 252 277 268 276 282 280 262 292 250 304 250 314 235 325 236 340 228 328 208 330 192 338 182 326 166 326 156 320 140 314 134 300 138 284"],
  ["#a5cbdf", "142 318 156 320 170 326 184 330 188 352 200 358 210 350 218 354 206 368 194 370 180 364 168 348 154 330"],
  ["#dfdfdf", "198 368 212 368 220 376 214 380"],
  ["#a9d0e2", "214 378 222 388 234 392 222 394"],
  ["#dfdfdf", "228 352 246 352 262 362 250 360"],
  ["#dfdfdf", "248 384 278 386 292 400 310 406 304 414 282 416 274 402 262 402 250 394"],
  ["#a2c9dc", "236 396 250 386 252 398 262 404 260 424 248 428 234 416 240 406"],
  ["#dfdfdf", "228 416 242 420 236 432 228 430"],
  ["#9fc5d8", "236 430 246 420 254 430 248 446 260 454 262 474 244 462 234 446 230 432"],
  ["#b1d7ea", "256 420 278 416 290 420 310 410 318 424 340 430 354 440 352 456 346 466 342 482 328 494 316 516 306 520 298 506 306 494 292 472 276 452 252 450 250 436"],
  ["#dfdfdf", "262 452 280 450 294 466 296 478 304 490 306 502 290 496 270 488 262 470"],
  ["#a0c6da", "270 488 290 492 302 504 300 518 308 528 294 532 298 544 286 554 290 566 282 576 276 576 270 560 266 520"],
  ["#9cc3d7", "262 476 268 490 266 540 276 576 300 588 278 584 266 570 262 530"],
  ["#a6cce0", "462 238 478 226 486 212 500 206 512 214 516 236 500 246 496 228 490 234 486 250 478 248 466 242"],
  ["#a6cce0", "440 242 446 250 454 260 440 264 442 252"],
  ["#a6cce0", "430 252 438 252 436 262 428 260"],
  ["#dfdfdf", "406 222 420 220 418 226 408 227"],
  ["#a9d0e2", "446 270 460 262 468 274 466 286 450 286"],
  ["#9fc5d8", "430 288 452 288 450 296 442 306 430 304"],
  ["#a6cce0", "466 256 490 252 508 260 526 262 545 268 536 278 520 280 518 292 508 292 498 280 478 276 466 268"],
  ["#a6cce0", "474 278 484 278 496 294 490 298 478 286"],
  ["#a6cce0", "504 292 516 294 510 306"],
  ["#b1d7ea", "522 292 540 290 564 293 562 302 530 304"],
  ["#dfdfdf", "512 212 522 220 532 212 560 208 576 208 600 204 640 192 660 198 700 200 760 206 800 212 846 220 830 228 812 228 826 260 806 236 780 236 790 262 788 290 776 272 760 260 738 256 720 266 690 264 664 268 648 262 630 252 600 254 580 262 584 276 560 274 546 266 528 250 516 242"],
  ["#12405c", "508 258 514 250 522 252 526 260 510 262"],
  ["#a0c6da", "568 266 596 264 608 252 634 256 660 266 652 282 630 282 606 288 592 280 584 288 576 272"],
  ["#dfdfdf", "584 290 606 288 650 284 640 300 612 304 592 298"],
  ["#dfdfdf", "558 298 574 300 600 304 640 306 622 334 600 332 574 318 550 308"],
  ["#dfdfdf", "544 306 566 318 584 338 592 344 610 348 600 366 572 378 556 350 546 330"],
  ["#a0c6da", "624 334 640 308 654 310 642 340 620 340"],
  ["#a6cce0", "640 342 654 312 668 328 692 340 682 356 668 376 668 394 662 388 650 358 640 350"],
  ["#b4daec", "648 284 664 272 684 286 716 290 738 278 736 256 756 264 778 276 770 292 762 302 774 318 772 340 754 352 736 350 724 346 708 334 690 338 668 326 650 306 642 294"],
  ["#dfdfdf", "666 268 700 264 738 268 736 280 716 290 684 286"],
  ["#dfdfdf", "706 336 716 342 722 360 730 368 718 364 706 350"],
  ["#a0c6da", "722 358 736 354 750 378 742 386 736 372 728 376"],
  ["#a6cce0", "714 400 724 406 744 434 740 438 726 420"],
  ["#a6cce0", "752 412 776 404 774 428 758 426"],
  ["#a6cce0", "742 440 764 444 790 450 764 446"],
  ["#a6cce0", "780 414 796 412 788 426 784 432"],
  ["#a6cce0", "816 428 832 428 841 430 841 446 830 440"],
  ["#dfdfdf", "841 430 864 448 850 450 841 446"],
  ["#a6cce0", "780 364 786 374 800 396 790 398 784 380"],
  ["#a6cce0", "790 316 808 308 810 286 816 300 814 312 798 322"],
  ["#a6cce0", "776 292 784 306 778 304"],
  ["#a0c6da", "756 492 780 484 794 466 806 464 818 456 828 462 828 474 838 476 842 454 850 474 862 498 858 520 844 536 826 534 812 516 786 520 758 526 764 510"],
  ["#a0c6da", "816 544 828 546 820 552"],
  ["#a6cce0", "904 526 910 538 888 550 862 564 886 546"],
  ["#dfdfdf", "412 338 428 314 470 306 484 318 520 322 540 326 560 356 566 376 592 384 574 408 560 422 562 454 546 474 546 494 530 520 500 524 484 476 490 450 478 420 476 404 440 402 418 396 404 374 406 352"],
  ["#a9d0e2", "428 312 446 312 432 332 412 350 410 340"],
  ["#bfe3f4", "442 316 468 306 474 330 480 350 462 358 430 336"],
  ["#bfe3f4", "520 324 540 326 546 350 520 350"],
  ["#a9d0e2", "518 352 550 354 548 380 530 388 514 380"],
  ["#a0c6da", "464 382 488 378 480 400 464 404"],
  ["#bfe3f4", "548 404 564 410 560 432 548 424"],
  ["#93bbcf", "484 474 508 476 506 506 496 508"],
  ["#b1d7ea", "498 508 508 506 526 490 536 490 536 508 522 524 502 526"],
  ["#dfdfdf", "568 490 576 470 588 460 588 472 578 498 570 496"],
  ["#dfdfdf", "130 650 180 644 250 634 310 638 320 614 336 636 390 648 430 634 490 628 560 618 620 624 700 618 740 622 782 634 750 646 772 650 738 662 166 662"],
];
const borders =
  "M404 374h32l8-18M436 374v28M476 316l6 44 36 12M480 358l-10 22M500 364l-6 22-16 18M518 378l-10 14 6 14M478 420l36-18 34 2M500 404l-2 26-10 4M514 406l10 26-14 20M524 432l24 6M510 452l-24 2M510 452l4 24M514 460l30-6M530 456l-8 24 24-4M508 476l14 4-14 16M566 376l-22 10 6 18M418 386h14M424 400l2-14M448 402l4-22h12M572 300l4 18M600 304l2 28M612 288l-8 14M626 286l-6 18M556 320l14-2M570 372l20-12";
const World = () => (
  <svg width="315" height="210" viewBox="27 48 945 630" role="img" aria-label="World map of salaries">
    <g stroke="#fff" strokeWidth="1" strokeLinejoin="round">
      {land.map(([fill, points]) => (
        <polygon key={points} fill={fill} points={points} />
      ))}
    </g>
    <path d={borders} fill="none" stroke="#fff" strokeWidth="1.500" />
    <path d="M840 48h131v132z" fill="#ffe97f" />
    <path d="M840 48l131 132" stroke="#e3b84e" strokeWidth="2" />
    <circle cx="932" cy="87" r="26" fill="none" stroke="#999" strokeWidth="3" />
    <path d="M932 82v20" stroke="#111" strokeWidth="5" />
    <circle cx="932" cy="73" r="3" fill="#111" />
  </svg>
);

/* ---------- data ---------- */
const jobs: [string, number][] = [
  ["Senior Data Scientist", 155],
  ["Machine Learning Engineer", 150],
  ["Senior Data Engineer", 150],
  ["Data Scientist", 130],
  ["Data Engineer", 125.5],
  ["Software Engineer", 125.5],
  ["Cloud Engineer", 115],
  ["Senior Data Analyst", 110],
  ["Business Analyst", 90],
  ["Data Analyst", 90],
];
const types: [string, number][] = [
  ["Full-time", 90],
  ["Part-time", 82.5],
  ["Contractor", 81.2],
  ["Temp work", 75],
  ["Internship", 65],
];

type ChartProps = {
  data: [string, number][];
  active: string;
  max: number;
  ticks: string[];
  labels: number;
  plot: number;
  bar: number;
};
const BarChart = ({ data, active, max, ticks, labels, plot, bar }: ChartProps) => (
  <Chart $labels={labels} $plot={plot}>
    <Names>
      {data.map(([n]) => (
        <span key={n}>{n}</span>
      ))}
    </Names>
    <Plot $steps={ticks.length - 1}>
      {data.map(([n, v]) => (
        <BarRow key={n}>
          <Bar $h={bar} $on={n === active} style={{ width: `${(v / max) * 100}%` }} />
        </BarRow>
      ))}
    </Plot>
    <Axis>
      {ticks.map((t) => (
        <span key={t}>{t}</span>
      ))}
    </Axis>
  </Chart>
);

type GroupProps = { name: string; w: number; launcher?: "on" | "off"; children: React.ReactNode };
const Group = ({ name, w, launcher, children }: GroupProps) => (
  <>
    <GroupBox $w={w}>
      <GroupBody>{children}</GroupBody>
      <GroupFoot>
        <span>{name}</span>
        {launcher && (
          <Launcher $off={launcher === "off"} aria-label={`${name} settings`}>
            <Line w={9} d="M.5 8V.5H8M3 3l5 5M8.500 4v4.500H4" />
          </Launcher>
        )}
      </GroupFoot>
    </GroupBox>
    <GroupRule />
  </>
);

type BigProps = { w: number; off?: boolean; icon: React.ReactNode; lines: string[]; drop?: boolean };
const Big = ({ w, off, icon, lines, drop }: BigProps) => (
  <BigButton $w={w} $off={off}>
    <BigIcon>{icon}</BigIcon>
    <BigText>
      {lines.map((t, i) => (
        <span key={i}>
          {t}
          {drop && i === lines.length - 1 && <Chevron />}
        </span>
      ))}
    </BigText>
  </BigButton>
);

const tabs = ["File", "Home", "Insert", "Draw", "Page Layout", "Formulas", "Data", "Review", "View", "Help", "Power Pivot"];

export default function App() {
  return (
    <Shell>
      <Global />
      <TitleBar>
        <DocName>
          <ExcelIcon size={16} />
          {"1_Salary_Dashboard  -  Excel"}
        </DocName>
        <SearchBox>
          <Line s={1.2} d="M10 1.500a4.500 4.500 0 1 1 0 9 4.500 4.500 0 0 1 0-9zM6.500 9.500 1 15" />
          <input placeholder="Search" aria-label="Search" />
        </SearchBox>
        <WindowTools>
          <Avatar>SA</Avatar>
          <WinButton aria-label="Minimize"><Line w={10} d="M0 5.500h10" /></WinButton>
          <WinButton aria-label="Restore"><Line w={10} d="M.5 2.500h7v7h-7zM2.500.500H8q1.500 0 1.500 1.500v5.500" /></WinButton>
          <WinButton aria-label="Close"><Line w={10} s={1.1} d="M0 0l10 10M10 0 0 10" /></WinButton>
        </WindowTools>
      </TitleBar>

      <TabRow>
        {tabs.map((t) => (
          <Tab key={t} $active={t === "Home"} $wide={t === "File"}>
            <span>{t}</span>
          </Tab>
        ))}
        <Spacer />
        <ShareButton>
          <Line w={12} d="M4 3.500H.5v8h9V8M3 8.500c0-3 2-4.500 5-4.500V1.500L11.500 5 8 8V6C6 6 4 6.500 3 8.500z" />
          Share
          <Chevron />
        </ShareButton>
        <PlainButton aria-label="Comments">
          <Line d="M5.500 3.500a2.800 2.800 0 1 1 0 5.600 2.800 2.800 0 0 1 0-5.600zM.5 15.500c0-4 2-6 5-6s5 2 5 6M5.500.500h10v7H13l-2 2V7" />
        </PlainButton>
      </TabRow>

      <Ribbon>
        <Group name="Clipboard" w={173} launcher="on">
          <Inset $w={8} />
          <Big w={48} off icon={<PasteIcon />} lines={["Paste", ""]} drop />
          <List $left={2}>
            <ListRow><SmallButton><CutIcon />Cut</SmallButton></ListRow>
            <ListRow>
              <SmallButton><CopyIcon />Copy</SmallButton>
              <CopyDrop aria-label="Copy options"><Chevron /></CopyDrop>
            </ListRow>
            <ListRow><SmallButton $off><BrushIcon />Format Painter</SmallButton></ListRow>
          </List>
        </Group>

        <Group name="Font" w={235} launcher="off">
          <Rows $left={8}>
            <Row $gap={3}>
              <Pick $w={122}><select aria-label="Font"><option>Aptos Narrow</option></select><Chevron /></Pick>
              <Pick $w={43}><select aria-label="Font size"><option>16</option></select><Chevron /></Pick>
              <Tool $w={24} $size={16} aria-label="Grow font"><GrowText>A<Line w={5} d="M.5 3.500l2-2 2 2" /></GrowText></Tool>
              <Tool $w={24} $size={13} aria-label="Shrink font"><GrowText>A<Line w={5} d="M.5 1.500l2 2 2-2" /></GrowText></Tool>
            </Row>
            <Row>
              <Tool $w={24}><b>B</b></Tool>
              <Tool $w={26}><Italic>I</Italic></Tool>
              <Tool $w={26}><u>U</u></Tool>
              <Drop />
              <Tick />
              <Tool $w={22} aria-label="Borders"><BorderIcon /></Tool>
              <Drop />
              <Tick />
              <Tool $w={26} aria-label="Fill colour"><FillIcon /></Tool>
              <Drop />
              <Tool $w={26}><FontColor>A</FontColor></Tool>
              <Drop />
            </Row>
          </Rows>
        </Group>

        <Group name="Alignment" w={301} launcher="off">
          <Rows $left={7} $w={145}>
            <Row>
              <Tool $w={26} aria-label="Top"><AlignIcon lines={[[0, 1, 15], [5, 3, 13], [10, 1, 15]]} /></Tool>
              <Tool $w={26} aria-label="Middle"><AlignIcon lines={[[3, 1, 15], [8, 3, 13], [13, 1, 15]]} /></Tool>
              <Tool $w={26} aria-label="Bottom"><AlignIcon lines={[[5, 1, 15], [10, 3, 13], [15, 1, 15]]} /></Tool>
              <Tick />
              <Tool $w={22} aria-label="Orientation"><Orientation /></Tool>
              <Drop />
            </Row>
            <Row>
              <Tool $w={26} aria-label="Left"><AlignIcon lines={[[2, 1, 15], [6, 1, 10], [10, 1, 15], [14, 1, 10]]} /></Tool>
              <Tool $w={26} aria-label="Centre"><AlignIcon lines={[[2, 1, 15], [6, 3, 13], [10, 1, 15], [14, 3, 13]]} /></Tool>
              <Tool $w={26} aria-label="Right"><AlignIcon lines={[[2, 1, 15], [6, 6, 15], [10, 1, 15], [14, 6, 15]]} /></Tool>
              <Tick />
              <Tool $w={22} aria-label="Decrease indent"><IndentIcon out /></Tool>
              <Tool $w={26} aria-label="Increase indent"><IndentIcon /></Tool>
            </Row>
          </Rows>
          <InnerRule />
          <Rows $left={9} $w={154}>
            <Row><SmallButton $off><WrapIcon />Wrap Text</SmallButton></Row>
            <Row>
              <SmallButton $off><MergeIcon />Merge &amp; Center</SmallButton>
              <Spacer />
              <Drop />
              <Inset $w={12} />
            </Row>
          </Rows>
        </Group>

        <Group name="Number" w={161} launcher="off">
          <Rows $left={8}>
            <Row><Pick $w={146} $off><select aria-label="Number format" disabled /><Chevron /></Pick></Row>
            <Row>
              <Tool $w={24} $size={17}>$</Tool>
              <Drop />
              <Tool $w={30} $size={17}>%</Tool>
              <Tool $w={24} aria-label="Comma"><Line w={8} h={14} s={0} f="#707070" d="M4 0a3.500 3.500 0 0 1 3.500 4c0 5-3 8-6 9V11.500c2-1 3-2.500 3-4.500A3.500 3.500 0 0 1 4 0z" /></Tool>
              <Tick />
              <Tool $w={20} aria-label="Increase decimal"><Decimal /></Tool>
              <Inset $w={4} />
              <Tool $w={24} aria-label="Decrease decimal"><Decimal more /></Tool>
            </Row>
          </Rows>
        </Group>

        <Group name="Styles" w={394}>
          <Inset $w={9} />
          <Big w={72} off icon={<CondIcon />} lines={["Conditional", "Formatting"]} drop />
          <Big w={62} off icon={<TableIcon />} lines={["Format as", "Table"]} drop />
          <Gallery>
            <GalleryMore aria-label="More styles"><Line w={8} s={1.2} d="M.5 1.500h7M1.500 4.500 4 7l2.500-2.500" /></GalleryMore>
          </Gallery>
        </Group>

        <Group name="Cells" w={146}>
          <Inset $w={7} />
          <Big w={44} off icon={<CellsIcon kind="insert" />} lines={["Insert", ""]} drop />
          <Big w={44} off icon={<CellsIcon kind="delete" />} lines={["Delete", ""]} drop />
          <Big w={44} off icon={<CellsIcon kind="format" />} lines={["Format", ""]} drop />
        </Group>

        <Group name="Editing" w={215}>
          <List $left={11} $w={113}>
            <ListRow>
              <SmallButton><SigmaIcon />AutoSum</SmallButton>
              <Spacer />
              <CopyDrop aria-label="AutoSum options"><Chevron /></CopyDrop>
              <Inset $w={7} />
            </ListRow>
            <ListRow><SmallButton $off><FillDown />Fill <Chevron /></SmallButton></ListRow>
            <ListRow><SmallButton><Eraser />Clear <Chevron /></SmallButton></ListRow>
          </List>
          <Big w={48} off icon={<SortIcon />} lines={["Sort &", "Filter"]} drop />
          <Big w={46} icon={<FindIcon />} lines={["Find &", "Select"]} drop />
        </Group>

        <Group name="Add-ins" w={62}>
          <Big w={62} off icon={<AddinsIcon />} lines={["Add-ins"]} />
        </Group>
        <Group name="Solver" w={57}>
          <Big w={57} icon={<SolverIcon />} lines={["Solver"]} />
        </Group>
        <Spacer />
        <Collapse aria-label="Collapse ribbon"><Chevron w={12} /></Collapse>
      </Ribbon>

      <FormulaRow>
        <Field $w={101}>
          <input aria-label="Name box" defaultValue="K4" />
          <button aria-label="Names"><Chevron w={12} /></button>
        </Field>
        <Grip><Line w={2} h={12} s={2} d="M1 1v2M1 5v2M1 9v2" /></Grip>
        <Field $w={85}>
          <button aria-label="Cancel"><Line w={12} s={1.3} c="#d9534f" d="M0 0l12 12M12 0 0 12" /></button>
          <button aria-label="Enter"><Line w={16} h={12} s={1.4} c="#6cc484" d="M.5 6.500 5.500 11 15.500.500" /></button>
          <Fx aria-label="Insert function">fx</Fx>
          <button aria-label="Recent functions"><Chevron w={10} /></button>
        </Field>
        <Inset $w={5} />
        <Field>
          <FormulaInput aria-label="Formula" defaultValue="Full-time" />
          <button aria-label="Expand"><Chevron w={12} /></button>
        </Field>
      </FormulaRow>

      <Work>
        <Sheet>
          <Heading>Data Science Salary Dashboard</Heading>
          <Filters>
            <FilterCell>
              <label htmlFor="job">Job Title</label>
              <CellSelect id="job" $w={182}><option>Data Analyst</option></CellSelect>
            </FilterCell>
            <FilterCell>
              <label htmlFor="country">Country</label>
              <CellSelect id="country" $w={144}><option>United States</option></CellSelect>
            </FilterCell>
            <FilterCell>
              <label htmlFor="type">Type</label>
              <CellSelect id="type" $w={128} $on><option>Full-time</option></CellSelect>
              <FillHandle />
              <DropMark aria-label="Open list"><Line w={7} h={4} s={0} f="currentColor" d="M0 0h7L3.500 4z" /></DropMark>
            </FilterCell>
          </Filters>
          <Charts>
            <BarChart data={jobs} active="Data Analyst" max={200} ticks={["$0K", "$50K", "$100K", "$150K", "$200K"]} labels={154} plot={212} bar={8} />
            <MapBox>
              <World />
              <figcaption>Powered by Bing</figcaption>
            </MapBox>
            <BarChart data={types} active="Full-time" max={100} ticks={["$0K", "$20K", "$40K", "$60K", "$80K", "$100K"]} labels={72} plot={243} bar={16} />
          </Charts>
          <Cards>
            <Card><h2>Median Salary:</h2><p>$90,000</p></Card>
            <Card><h2>Top Job Platfrom:</h2><p>Indeed</p></Card>
            <Card><h2>Job Count:</h2><p>6,480</p></Card>
          </Cards>
        </Sheet>
        <VScroll>
          <VTrack>
            <Line w={9} h={8} s={0} f="#c8c8c8" d="M4.500 0 9 8H0z" />
            <VThumb />
            <Line w={9} h={8} s={0} f="#c8c8c8" d="M0 0h9L4.500 8z" />
          </VTrack>
        </VScroll>
      </Work>

      <SheetTabs>
        <SheetNav aria-label="Previous sheet"><Line w={8} h={12} s={1.2} d="M6.500 1l-5 5 5 5" /></SheetNav>
        <SheetNav aria-label="Next sheet"><Line w={8} h={12} s={1.2} d="M1.500 1l5 5-5 5" /></SheetNav>
        <SheetTab><span>Salary_Dashboard</span></SheetTab>
        <TabRule />
        <AddSheet aria-label="New sheet"><Line w={12} d="M0 6.500h12M6.500 0v12" /></AddSheet>
        <Spacer />
        <Line w={2} h={12} s={2} c="#fff" d="M1 1v2M1 5v2M1 9v2" />
        <HScroll>
          <Line w={8} h={10} s={0} f="#c8c8c8" d="M8 0v10L0 5z" />
          <HThumb />
          <Line w={8} h={10} s={0} f="#c8c8c8" d="M0 0v10l8-5z" />
        </HScroll>
      </SheetTabs>

      <Status>
        <span>Edit</span>
        <span>Calculate</span>
        <Access>
          <Line w={14} s={1.3} d="M6.500.700a1.500 1.500 0 1 1 0 3 1.500 1.500 0 0 1 0-3zM1 2.500l4 2.500v3l-2 5.500M12 2.500 8 5v2M5 9l1.500-1 1 1M8.500 8l5 6M13.500 8l-5 6" />
          Accessibility: Investigate
        </Access>
        <Spacer />
        <ViewTools>
          <ViewButton aria-label="Normal"><Line w={13} d="M.5.500h12v12H.5zM4.500.500v12M8.500.500v12M.5 4.500h12M.5 8.500h12" /></ViewButton>
          <ViewButton aria-label="Page layout"><Line w={13} d="M.5.500h12v12H.5zM3.500 2.500h6v8h-6zM5 4.500h3M5 6.500h3M5 8.500h3" /></ViewButton>
          <ViewButton aria-label="Page break"><Line w={13} d="M.5.500h12v12H.5zM4.500.500v7h4v-7" /></ViewButton>
          <Inset $w={4} />
          <button aria-label="Zoom out"><Line w={8} d="M0 4.500h8" /></button>
          <Zoom type="range" aria-label="Zoom" defaultValue={50} />
          <button aria-label="Zoom in"><Line w={8} d="M0 4.500h8M4.500 0v8" /></button>
          <Inset $w={13} />
          100%
        </ViewTools>
      </Status>

      <Taskbar>
        <Apps>
          {apps.map((a) => (
            <AppSlot key={a.name} aria-label={a.name} $bg={a.bg}>
              <span>
                {a.art}
                {a.mark && <Mark $kind={a.mark} />}
              </span>
            </AppSlot>
          ))}
        </Apps>
        <Tray>
          <TrayButton aria-label="Hidden icons"><Line w={13} h={8} s={1.3} d="M1 7l5.500-5.500L12 7" /></TrayButton>
          <TrayButton aria-label="Battery">
            <svg width="17" height="14" viewBox="0 0 17 14" fill="none" stroke="#111">
              <path d="M6.500 2.500h8v9h-10v-3M15 5.500h1.500v3H15M1.500 0v2M4.500 0v2M.500 2.500h5v2.500l-1.500 1.500h-2L.5 5z" />
              <path d="M8 5h4.500v4H8z" fill="#111" />
            </svg>
          </TrayButton>
          <TrayButton aria-label="Network"><Line w={15} h={15} s={1.1} d="M1.500 13A11.500 11.500 0 0 1 13 2M4.500 13.500A8.500 8.500 0 0 1 13 5.500M7.500 14A5.500 5.500 0 0 1 13 8.700M10.500 14a2.500 2.500 0 0 1 2.500-2.200M11.500 13.500H13" /></TrayButton>
          <TrayButton aria-label="Pen"><Line w={17} h={16} s={1.2} d="M7.500 10c-3-2-7-1-6.500 1.500s4 2 5-.5L10 2q1.500-2.500 2.500-1t-1 4L7 14l-1 1.500.500-4M8.500 11c3-5 8-6 7.500-3.500S11 10 9.500 9.500" /></TrayButton>
          <Clock>
            3:03 AM<br />Thursday<br />3/13/2025
          </Clock>
          <Notice aria-label="Notifications">
            <Line w={16} h={16} s={1} f="#0c0c0c" c="#0c0c0c" d="M.5.500h15v11h-4V15L8 11.500H.5z" />
            <Badge>3</Badge>
          </Notice>
          <Edge />
        </Tray>
      </Taskbar>
    </Shell>
  );
}
